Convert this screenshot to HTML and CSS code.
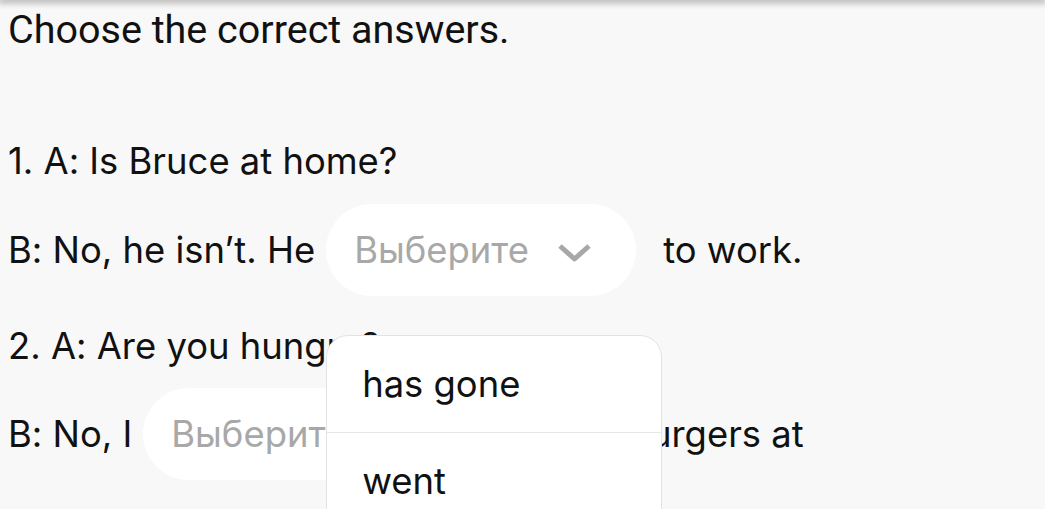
FILE: index.html
```html
<!DOCTYPE html>
<html lang="en">
<head>
<meta charset="utf-8">
<title>Choose the correct answers</title>
<link rel="stylesheet" href="styles.css">
</head>
<body>
<div class="topbar"></div>
<main class="exercise">
  <p class="title">Choose the correct answers.</p>

  <p class="q">1. A: Is Bruce at home?</p>
  <div class="row">
    <span class="txt">B: No, he isn’t. He</span>
    <div class="select">
      <span class="placeholder">Выберите</span>
      <svg class="chev" width="35" height="20" viewBox="0 0 35 20"><polyline points="3,3 17.5,16 32,3" fill="none" stroke="#a8a8a8" stroke-width="5" stroke-linejoin="round"/></svg>
      <ul class="menu">
        <li class="opt">has gone</li>
        <li class="opt">went</li>
      </ul>
    </div>
    <span class="txt">to work.</span>
  </div>

  <p class="q">2. A: Are you hungry?</p>
  <div class="row">
    <span class="txt">B: No, I</span>
    <div class="select">
      <span class="placeholder">Выберите</span>
      <svg class="chev" width="35" height="20" viewBox="0 0 35 20"><polyline points="3,3 17.5,16 32,3" fill="none" stroke="#a8a8a8" stroke-width="5" stroke-linejoin="round"/></svg>
    </div>
    <span class="txt">two hamburgers at</span>
  </div>
</main>
</body>
</html>
```
FILE: styles.css
```css
html {
  margin: 0;
  padding: 0;
  background: #f8f8f8;
}
body {
  margin: 0;
  padding: 0;
  min-height: 100vh;
  font-family: Inter, "Noto Sans", sans-serif;
  font-size: 36.4px;
  font-feature-settings: "calt" 0;
  line-height: 44px;
  color: #111;
}
.topbar {
  height: 0;
  box-shadow: 0 0 7px 2px rgba(0, 0, 0, 0.45);
}
.exercise {
  padding: 8px 8px 0;
}
.title {
  margin: 0 0 87px;
  font-family: Roboto, "Liberation Sans", sans-serif;
  font-size: 39.5px;
  line-height: 44px;
  white-space: nowrap;
}
.q {
  margin: 0;
  white-space: nowrap;
}
.row + .q { margin-top: 28px; }
.q + .row { margin-top: 21px; }
.q + .row + .q + .row { margin-top: 20px; }
.row {
  display: flex;
  align-items: center;
  height: 92px;
  white-space: nowrap;
}
.select {
  position: relative;
  box-sizing: border-box;
  width: 310px;
  height: 92px;
  margin: 0 27px 0 11px;
  padding: 0 0 0 28px;
  background: #fff;
  border-radius: 46px;
  display: flex;
  align-items: center;
  gap: 28px;
}
.placeholder {
  color: #a8a8a8;
}
.chev {
  flex: none;
  margin-top: 5px;
}
.menu {
  position: absolute;
  left: 0;
  top: calc(100% + 39px);
  z-index: 2;
  box-sizing: border-box;
  width: 336px;
  margin: 0;
  padding: 0;
  list-style: none;
  background: #fff;
  border: 1px solid #e3e3e3;
  border-radius: 22px;
  overflow: hidden;
}
.opt {
  height: 96px;
  padding-left: 35px;
  line-height: 96px;
  color: #111;
}
.opt + .opt {
  border-top: 1px solid #e6e6e6;
}
```
